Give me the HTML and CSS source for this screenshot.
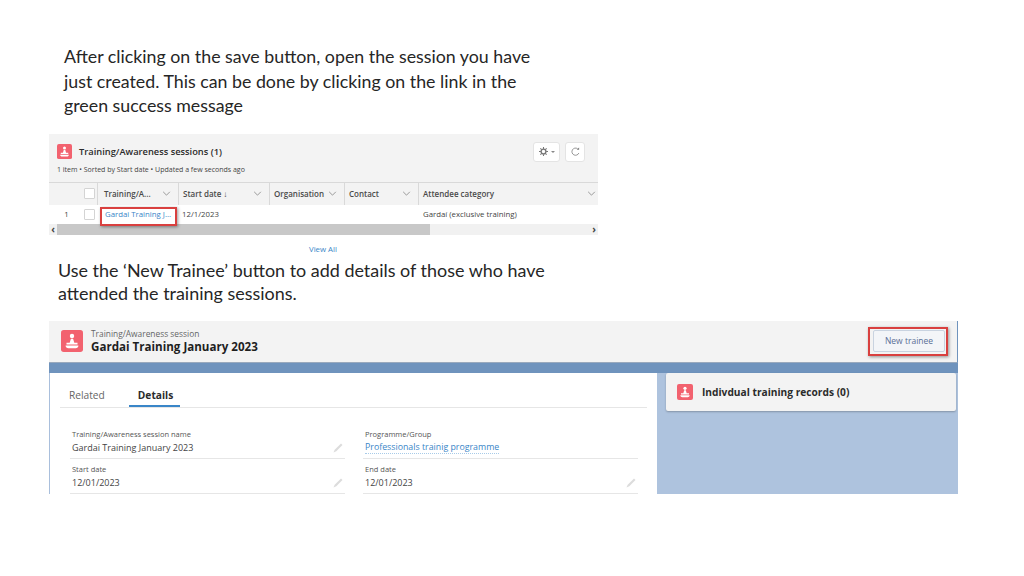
FILE: index.html
```html
<!DOCTYPE html>
<html lang="en">
<head>
    <meta charset="UTF-8">
    <title>Training sessions</title>
    <link rel="stylesheet" href="styles.css">
</head>
<body>
    <svg class="defs" width="0" height="0">
        <symbol id="stamp" viewBox="0 0 24 24">
            <rect width="24" height="24" rx="3" fill="#f2626f"/>
            <circle cx="12" cy="6.500" r="2.400" fill="#fff"/>
            <path d="M10.800 9.500h2.400l1.300 4.500H18v1.800H6V14h3.500z" fill="#fff"/>
            <path d="M5 17h14c0 1.800-1.500 3-3 3H8c-1.500 0-3-1.200-3-3z" fill="#fff"/>
        </symbol>
    </svg>

    <div class="slide">
        <p class="note note-first">After clicking on the save button, open the session you have<br>just created. This can be done by clicking on the link in the<br>green success message</p>

        <div class="list-shot">
            <div class="list-head">
                <div class="list-title-row">
                    <svg class="icon"><use href="#stamp"/></svg>
                    <span class="list-title">Training/Awareness sessions (1)</span>
                    <div class="list-actions">
                        <span class="tool-btn tool-gear">
                            <svg width="9" height="9" viewBox="0 0 12 12"><circle cx="6" cy="6" r="3.200" fill="none" stroke="#777" stroke-width="1.800"/><path d="M6 0v2.500M6 9.500V12M0 6h2.500M9.500 6H12M1.800 1.800l1.800 1.800M8.400 8.400l1.800 1.800M1.800 10.200l1.800-1.800M8.400 3.600l1.800-1.800" stroke="#777" stroke-width="1.400"/></svg>
                            <i class="caret"></i>
                        </span>
                        <span class="tool-btn tool-refresh">
                            <svg width="9" height="9" viewBox="0 0 12 12"><path d="M10.500 8A4.800 4.800 0 1 1 8.800 2.300" fill="none" stroke="#777" stroke-width="1"/><path d="M10.800 .6v3.200H7.600z" fill="#777"/></svg>
                        </span>
                    </div>
                </div>
                <div class="list-meta">1 item • Sorted by Start date • Updated a few seconds ago</div>
            </div>

            <div class="grid grid-head">
                <div class="cell"></div>
                <div class="cell"><i class="check"></i></div>
                <div class="cell col">Training/A...<svg class="chev" viewBox="0 0 10 6"><path d="M1 1l4 4 4-4" fill="none" stroke="#888"/></svg></div>
                <div class="cell col">Start date ↓<svg class="chev" viewBox="0 0 10 6"><path d="M1 1l4 4 4-4" fill="none" stroke="#888"/></svg></div>
                <div class="cell col">Organisation<svg class="chev" viewBox="0 0 10 6"><path d="M1 1l4 4 4-4" fill="none" stroke="#888"/></svg></div>
                <div class="cell col">Contact<svg class="chev" viewBox="0 0 10 6"><path d="M1 1l4 4 4-4" fill="none" stroke="#888"/></svg></div>
                <div class="cell col col-last">Attendee category<svg class="chev" viewBox="0 0 10 6"><path d="M1 1l4 4 4-4" fill="none" stroke="#888"/></svg></div>
            </div>
            <div class="grid grid-row">
                <div class="cell row-num">1</div>
                <div class="cell"><i class="check"></i></div>
                <div class="cell"><span class="link">Gardai Training J...</span></div>
                <div class="cell">12/1/2023</div>
                <div class="cell"></div>
                <div class="cell"></div>
                <div class="cell">Gardaí (exclusive training)</div>
            </div>
            <div class="scrollbar">
                <span class="arrow">‹</span>
                <div class="thumb"></div>
                <span class="arrow">›</span>
            </div>
            <div class="view-all"><span class="link">View All</span></div>
            <div class="red-box link-box"></div>
        </div>

        <p class="note note-second">Use the ‘New Trainee’ button to add details of those who have<br>attended the training sessions.</p>

        <div class="record-shot">
            <div class="record-head">
                <svg class="icon icon-large"><use href="#stamp"/></svg>
                <div class="record-names">
                    <div class="record-type">Training/Awareness session</div>
                    <div class="record-name">Gardai Training January 2023</div>
                </div>
                <div class="new-wrap">
                    <span class="new-btn">New trainee</span>
                    <div class="red-box new-box"></div>
                </div>
            </div>
            <div class="record-body">
                <div class="details-panel">
                    <div class="tabs">
                        <span class="tab">Related</span>
                        <span class="tab tab-active">Details</span>
                    </div>
                    <div class="fields">
                        <div class="field">
                            <div class="field-label">Training/Awareness session name</div>
                            <div class="field-value">Gardai Training January 2023<svg class="pencil" viewBox="0 0 10 10"><path d="M.5 9.500l1.200-2.800L8 .5l1.500 1.500L3.300 8.300z" fill="#dcdcdc"/></svg></div>
                        </div>
                        <div class="field">
                            <div class="field-label">Programme/Group</div>
                            <div class="field-value"><span class="link link-lookup">Professionals trainig programme</span></div>
                        </div>
                        <div class="field">
                            <div class="field-label">Start date</div>
                            <div class="field-value">12/01/2023<svg class="pencil" viewBox="0 0 10 10"><path d="M.5 9.500l1.200-2.800L8 .5l1.500 1.500L3.300 8.300z" fill="#dcdcdc"/></svg></div>
                        </div>
                        <div class="field">
                            <div class="field-label">End date</div>
                            <div class="field-value">12/01/2023<svg class="pencil" viewBox="0 0 10 10"><path d="M.5 9.500l1.200-2.800L8 .5l1.500 1.500L3.300 8.300z" fill="#dcdcdc"/></svg></div>
                        </div>
                    </div>
                </div>
                <div class="side-panel">
                    <div class="side-card">
                        <svg class="icon icon-small"><use href="#stamp"/></svg>
                        <span class="side-title">Indivdual training records (0)</span>
                    </div>
                </div>
            </div>
        </div>
    </div>
</body>
</html>
```

FILE: styles.css
```css
body {
    margin: 0;
    background-color: white;
    font-family: "Open Sans", "Liberation Sans", sans-serif;
    color: #444;
}
.defs {
    display: block;
}
.slide {
    width: 1024px;
    height: 576px;
    padding-top: 44px;
    box-sizing: border-box;
    overflow: hidden;
}
.note {
    margin: 0;
    font-family: Lato, "Liberation Sans", sans-serif;
    font-size: 17.800px;
    line-height: 24.500px;
    color: #262626;
}
.note-first {
    margin-left: 64px;
}
.note-second {
    margin: 0 0 15px 58px;
    font-size: 17.950px;
    line-height: 23.500px;
}
.icon {
    width: 15px;
    height: 15px;
    flex: none;
}
.link {
    color: #3a86c8;
}

/* list screenshot */
.list-shot {
    position: relative;
    width: 549px;
    margin: 16px 0 0 49px;
    font-size: 7.800px;
}
.list-head {
    height: 48px;
    padding: 8px 13px 0 8px;
    box-sizing: border-box;
    background-color: #f3f3f3;
}
.list-title-row {
    display: flex;
    align-items: center;
    gap: 7px;
}
.list-title {
    font-size: 9.300px;
    font-weight: 600;
    color: #2b2b2b;
}
.list-actions {
    display: flex;
    gap: 5px;
    margin-left: auto;
}
.tool-btn {
    display: flex;
    align-items: center;
    justify-content: center;
    gap: 3px;
    height: 20px;
    background-color: white;
    border: 1px solid #e4e4e4;
    border-radius: 3px;
    box-sizing: border-box;
}
.tool-gear {
    width: 27px;
}
.tool-refresh {
    width: 20px;
}
.caret {
    border: 2px solid transparent;
    border-top: 2px solid #888;
    margin-top: 2px;
}
.list-meta {
    margin-top: 3px;
    font-size: 7px;
    color: #444;
}
.grid {
    display: grid;
    grid-template-columns: 31px 17px 81px 91px 75px 74px 180px;
}
.grid-head {
    height: 23px;
    background-color: #f3f3f3;
    border-top: 1px solid #d9d9d9;
    box-sizing: border-box;
}
.grid-head .col {
    font-size: 8px;
    font-weight: 600;
    border-left: 1px solid #d9d9d9;
    justify-content: space-between;
    padding-right: 7px;
    color: #4a4a4a;
}
.grid-head .col-last {
    padding-right: 2px;
}
.grid-head .col:nth-child(3) {
    padding-left: 6px;
}
.grid-row {
    height: 19px;
    background-color: white;
}
.cell {
    display: flex;
    align-items: center;
    padding-left: 4px;
    white-space: nowrap;
    min-width: 0;
    box-sizing: border-box;
}
.grid-row .cell:nth-child(3) {
    padding-left: 8px;
}
.grid-row .cell:nth-child(7) {
    padding-left: 5px;
}
.row-num {
    justify-content: center;
}
.check {
    width: 9px;
    height: 9px;
    background-color: white;
    border: 1px solid #d4d4d4;
    border-radius: 1px;
}
.chev {
    width: 9px;
    height: 5px;
    flex: none;
}
.scrollbar {
    display: flex;
    align-items: center;
    height: 11px;
    background-color: #f1f1f1;
    font-size: 10px;
    font-weight: 700;
    line-height: 11px;
}
.arrow {
    width: 8px;
    text-align: center;
    color: #444;
}
.thumb {
    width: 373px;
    height: 100%;
    background-color: #c8c8c8;
    margin-right: auto;
}
.view-all {
    margin-top: 9px;
    padding-left: 260px;
    height: 15px;
}
.red-box {
    position: absolute;
    border: 2px solid #d9403f;
    box-shadow: 1px 1px 3px rgba(0, 0, 0, 0.4);
    box-sizing: border-box;
}
.link-box {
    left: 51px;
    top: 73px;
    width: 77px;
    height: 19px;
}

/* record screenshot */
.record-shot {
    width: 909px;
    height: 173px;
    margin-left: 49px;
    display: flex;
    flex-direction: column;
    background-color: #aec3de;
}
.record-head {
    display: flex;
    align-items: center;
    height: 42px;
    flex: none;
    padding: 0 11px 0 12px;
    box-sizing: border-box;
    background-color: #f3f3f3;
    border-bottom: 1px solid #99a9bd;
    border-right: 1px solid #6f93bd;
}
.icon-large {
    width: 22px;
    height: 22px;
}
.icon-small {
    width: 16px;
    height: 16px;
}
.record-names {
    margin-left: 8px;
}
.record-type {
    font-size: 8.400px;
    line-height: 10px;
    color: #666;
}
.record-name {
    font-size: 11.600px;
    font-weight: 700;
    line-height: 15px;
    color: #1f1f1f;
}
.new-wrap {
    position: relative;
    margin-left: auto;
    margin-right: 1px;
}
.new-btn {
    display: block;
    width: 72px;
    height: 22px;
    line-height: 20px;
    text-align: center;
    font-size: 8.500px;
    color: #5a6f96;
    background-color: #f3f5f8;
    border: 1px solid #c9d3e0;
    border-radius: 2px;
    box-sizing: border-box;
}
.new-box {
    left: -5px;
    top: -3px;
    width: 80px;
    height: 29px;
}
.record-body {
    flex: 1;
    display: flex;
    min-height: 0;
    padding-top: 10px;
    background: linear-gradient(#6f93bd 0, #6f93bd 10px, #aec3de 10px);
}
.details-panel {
    width: 608px;
    flex: none;
    background-color: white;
    border-left: 1px solid #a9bfdc;
    padding: 0 10px;
    box-sizing: border-box;
    overflow: hidden;
}
.tabs {
    display: flex;
    height: 34px;
    border-bottom: 1px solid #e6e6e6;
    font-size: 10.200px;
}
.tab {
    display: flex;
    align-items: flex-end;
    padding: 0 9px 5px;
    margin-right: 15px;
    color: #666;
}
.tab-active {
    font-weight: 700;
    color: #2b2b2b;
    border-bottom: 2px solid #3a86c8;
    height: 34px;
    padding-bottom: 3px;
    box-sizing: border-box;
    margin-right: 0;
    width: 51px;
}
.fields {
    display: grid;
    grid-template-columns: 275px 275px;
    column-gap: 18px;
    margin: 20px 0 0 10px;
}
.field {
    height: 35px;
}
.field-label {
    padding-left: 2px;
    font-size: 7.500px;
    line-height: 12px;
    color: #555;
}
.field-value {
    display: flex;
    align-items: center;
    justify-content: space-between;
    height: 19px;
    padding: 0 2px 2px;
    box-sizing: border-box;
    border-bottom: 1px solid #e6e6e6;
    font-size: 9px;
    color: #444;
}
.link-lookup {
    font-size: 8.800px;
    border-bottom: 1px dotted #a8cbe8;
}
.pencil {
    width: 10px;
    height: 10px;
}
.side-panel {
    flex: 1;
    padding-left: 9px;
    padding-right: 2px;
}
.side-card {
    display: flex;
    align-items: center;
    gap: 9px;
    height: 38px;
    padding-left: 11px;
    background-color: #f3f3f3;
    border-radius: 2px;
    box-shadow: 0 1px 2px rgba(0, 0, 0, 0.25);
}
.side-title {
    font-size: 10.200px;
    font-weight: 700;
    color: #2b2b2b;
}
```
